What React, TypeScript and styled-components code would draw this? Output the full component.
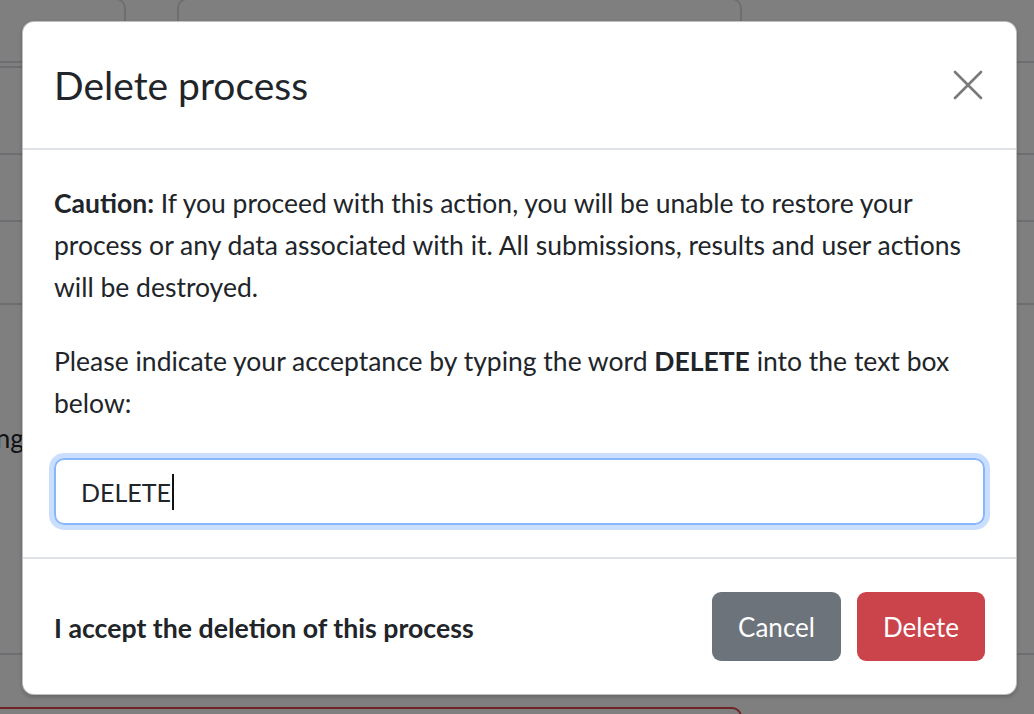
import React from 'react';
import styled, { createGlobalStyle } from 'styled-components';

const GlobalStyle = createGlobalStyle`
    html, body {
        margin: 0;
        padding: 0;
        background: #ffffff;
        overflow: hidden;
    }

    body {
        font-family: Lato, 'Liberation Sans', sans-serif;
        color: #212529;
    }
`;

/* ---------- page behind the dialog ---------- */

const Page = styled.div`
    position: relative;
    width: 1034px;
    height: 714px;
    overflow: hidden;
    background: #ffffff;
`;

const TopRow = styled.div`
    display: flex;
    gap: 51px;
    margin: -2px 0 0 -12px;
    width: 754px;
`;

const TopBox = styled.div<{ $grow?: boolean }>`
    height: 70px;
    border: 2px solid #d8dde2;
    border-radius: 10px;
    box-sizing: border-box;
    ${({ $grow }) => ($grow ? 'flex: 1;' : 'width: 138px;')}
`;

const Table = styled.div`
    display: flex;
    flex-direction: column;
    margin-top: -7px;
`;

const TableRow = styled.div<{ $h: number }>`
    height: ${({ $h }) => $h}px;
    border-bottom: 2px solid #d8dde2;
    box-sizing: border-box;
    display: flex;
    align-items: flex-start;
    font-size: 26px;
`;

const RowText = styled.span`
    margin: 117px 0 0 -56px;
    color: #212529;
`;

const DangerBox = styled.div`
    margin-top: 52px;
    margin-left: -12px;
    width: 754px;
    height: 60px;
    border: 2px solid #dc4752;
    border-radius: 10px;
    box-sizing: border-box;
`;

/* ---------- dialog ---------- */

const Backdrop = styled.div`
    position: absolute;
    inset: 0;
    background: rgba(0, 0, 0, 0.5);
    padding: 21px 17px 0 22px;
    box-sizing: border-box;
`;

const Dialog = styled.div`
    width: 995px;
    height: 674px;
    box-sizing: border-box;
    background: #ffffff;
    border: 1px solid rgba(0, 0, 0, 0.25);
    border-radius: 12px;
    box-shadow: 0 2px 4px rgba(0, 0, 0, 0.2);
    display: flex;
    flex-direction: column;
    overflow: hidden;
`;

const Header = styled.div`
    height: 128px;
    flex-shrink: 0;
    box-sizing: border-box;
    border-bottom: 2px solid #dee2e6;
    display: flex;
    align-items: center;
    justify-content: space-between;
    padding: 0 30px 0 31px;
`;

const Title = styled.h2`
    margin: 0;
    font-size: 39px;
    font-weight: 400;
    line-height: 1.2;
    color: #212529;
`;

const CloseButton = styled.button`
    width: 36px;
    height: 36px;
    padding: 0;
    border: 0;
    background: transparent;
    display: flex;
    align-items: center;
    justify-content: center;
    cursor: pointer;
`;

const Body = styled.div`
    padding: 32px 31px 32px 31px;
    border-bottom: 2px solid #dee2e6;
    font-size: 26.5px;
    line-height: 42px;
`;

const Paragraph = styled.p`
    margin: 0 0 32px;
`;

const FakeInput = styled.div`
    margin-top: 34px;
    height: 67px;
    box-sizing: border-box;
    border: 2px solid #86b7fe;
    border-radius: 10px;
    box-shadow: 0 0 0 5px rgba(13, 110, 253, 0.22);
    display: flex;
    align-items: center;
    padding-left: 25px;
    font-size: 25px;
    color: #212529;
`;

const Caret = styled.span`
    display: inline-block;
    width: 2px;
    height: 36px;
    background: #111111;
    margin-left: 1px;
`;

const Footer = styled.div`
    flex: 1;
    display: flex;
    align-items: center;
    justify-content: space-between;
    padding: 0 31px 0 31px;
`;

const Accept = styled.span`
    font-size: 26.7px;
    font-weight: 700;
    color: #212529;
    margin-top: 3px;
`;

const Actions = styled.div`
    display: flex;
    gap: 16px;
`;

const Button = styled.button<{ $variant: 'secondary' | 'danger' }>`
    height: 69px;
    padding: 0 26px;
    border: 0;
    border-radius: 9px;
    font-family: inherit;
    font-size: 26px;
    color: #ffffff;
    background: ${({ $variant }) => ($variant === 'danger' ? '#cc444b' : '#6c737b')};
    cursor: pointer;
`;

const CloseIcon = () => (
    <svg width="30" height="30" viewBox="0 0 30 30" fill="none">
        <path d="M2 2 L28 28 M28 2 L2 28" stroke="#7a7a7a" strokeWidth="2.6" strokeLinecap="round" />
    </svg>
);

export default function App() {
    return (
        <>
            <GlobalStyle />
            <Page>
                <TopRow>
                    <TopBox />
                    <TopBox $grow />
                </TopRow>
                <Table>
                    <TableRow $h={0} />
                    <TableRow $h={92} />
                    <TableRow $h={67} />
                    <TableRow $h={83} />
                    <TableRow $h={350}>
                        <RowText>Settings</RowText>
                    </TableRow>
                </Table>
                <DangerBox />

                <Backdrop>
                    <Dialog role="dialog" aria-labelledby="delete-title">
                        <Header>
                            <Title id="delete-title">Delete process</Title>
                            <CloseButton aria-label="Close">
                                <CloseIcon />
                            </CloseButton>
                        </Header>
                        <Body>
                            <Paragraph>
                                <strong>Caution:</strong> If you proceed with this action, you will be unable to restore your
                                process or any data associated with it. All submissions, results and user actions will be
                                destroyed.
                            </Paragraph>
                            <Paragraph>
                                Please indicate your acceptance by typing the word <strong>DELETE</strong> into the text box
                                below:
                            </Paragraph>
                            <FakeInput role="textbox">
                                DELETE
                                <Caret />
                            </FakeInput>
                        </Body>
                        <Footer>
                            <Accept>I accept the deletion of this process</Accept>
                            <Actions>
                                <Button $variant="secondary">Cancel</Button>
                                <Button $variant="danger">Delete</Button>
                            </Actions>
                        </Footer>
                    </Dialog>
                </Backdrop>
            </Page>
        </>
    );
}
